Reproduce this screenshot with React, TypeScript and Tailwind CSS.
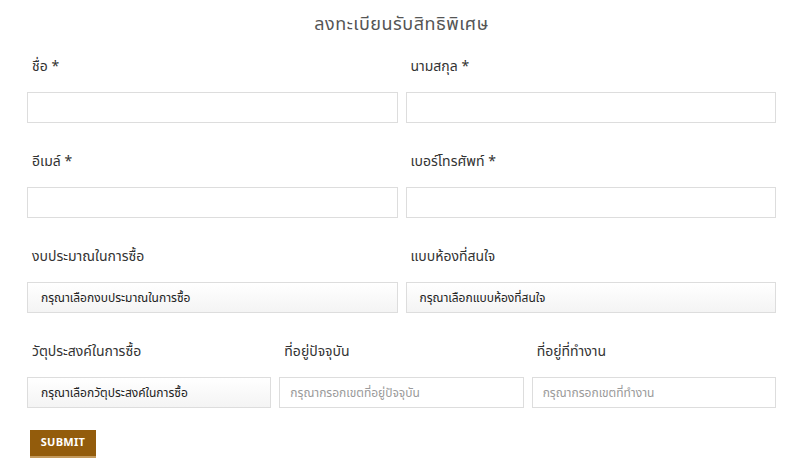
import React from "react";

const font = { fontFamily: '"Noto Sans Thai", Tahoma, "Noto Sans", "DejaVu Sans", sans-serif' };

function Label({ children }: { children: React.ReactNode }) {
  return <label className="block h-5 leading-5 text-[14px] text-[#333] mb-[15px] pl-[5px]">{children}</label>;
}

function TextField({ label, placeholder }: { label: string; placeholder?: string }) {
  return (
    <div className="flex-1 min-w-0">
      <Label>{label}</Label>
      <input
        type="text"
        placeholder={placeholder}
        className="block w-full h-[31px] border border-[#dddddd] bg-white px-[10px] text-[12px] text-[#333] placeholder:text-[#9a9a9a] outline-none"
      />
    </div>
  );
}

function SelectField({ label, text }: { label: string; text: string }) {
  return (
    <div className="flex-1 min-w-0">
      <Label>{label}</Label>
      <div className="flex items-center h-[31px] border border-[#dddddd] bg-gradient-to-b from-white to-[#f4f4f4] pl-[13px] text-[12px] text-[#222]">
        {text}
      </div>
    </div>
  );
}

export default function App() {
  return (
    <div className="w-[800px] h-[475px] bg-white overflow-hidden" style={font}>
      <div className="pl-[27px] pr-[24px]">
        <h1 className="pt-[12px] h-[57px] text-center text-[18px] leading-[26px] text-[#555] tracking-[0.5px]">
          ลงทะเบียนรับสิทธิพิเศษ
        </h1>

        <div className="flex gap-[8px] mb-[29px]">
          <TextField label="ชื่อ *" />
          <TextField label="นามสกุล *" />
        </div>

        <div className="flex gap-[8px] mb-[29px]">
          <TextField label="อีเมล์ *" />
          <TextField label="เบอร์โทรศัพท์ *" />
        </div>

        <div className="flex gap-[8px] mb-[29px]">
          <SelectField label="งบประมาณในการซื้อ" text="กรุณาเลือกงบประมาณในการซื้อ" />
          <SelectField label="แบบห้องที่สนใจ" text="กรุณาเลือกแบบห้องที่สนใจ" />
        </div>

        <div className="flex gap-[8px] mb-[22px]">
          <SelectField label="วัตุประสงค์ในการซื้อ" text="กรุณาเลือกวัตุประสงค์ในการซื้อ" />
          <TextField label="ที่อยู่ปัจจุบัน" placeholder="กรุณากรอกเขตที่อยู่ปัจจุบัน" />
          <TextField label="ที่อยู่ที่ทำงาน" placeholder="กรุณากรอกเขตที่ทำงาน" />
        </div>

        <button className="block ml-[3px] h-[28px] w-[66px] bg-[#935c0c] border-b-2 border-[#c49a5c] text-white text-[11px] font-bold tracking-[0.3px]">
          SUBMIT
        </button>
      </div>
    </div>
  );
}
